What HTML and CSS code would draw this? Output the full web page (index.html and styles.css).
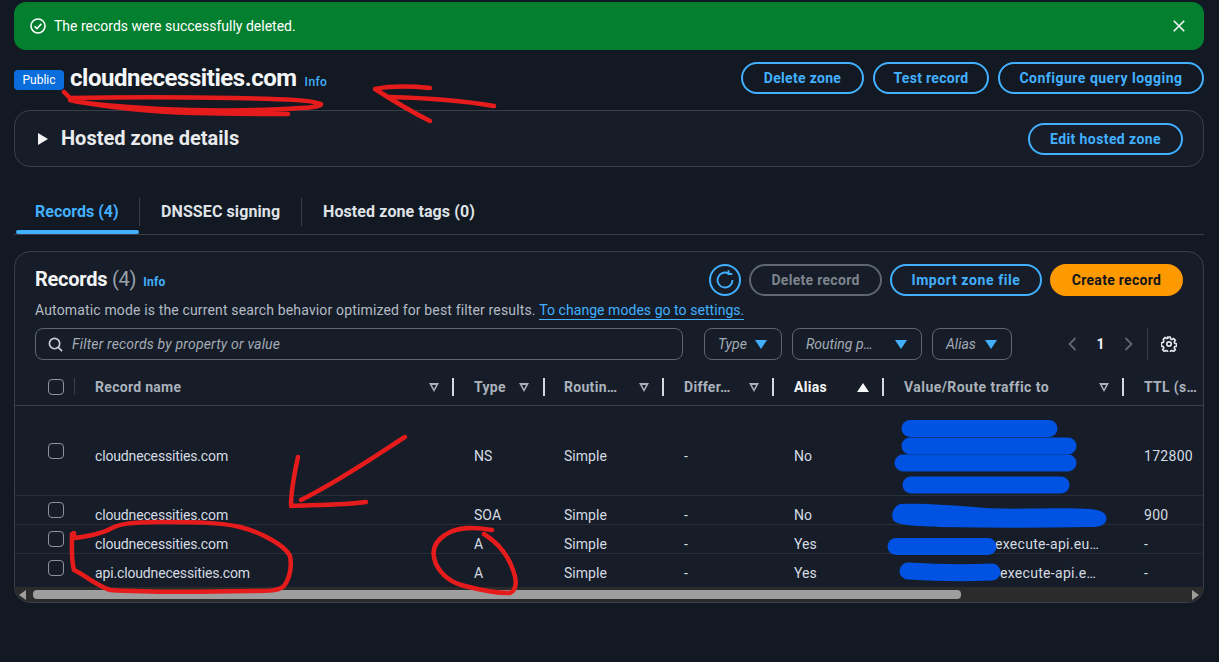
FILE: index.html
```html
<!DOCTYPE html>
<html lang="en">
<head>
<meta charset="utf-8">
<title>cloudnecessities.com</title>
<link rel="stylesheet" href="styles.css">
</head>
<body>
<div class="flash">
  <svg class="flash-icon" viewBox="0 0 16 16"><circle cx="8" cy="8" r="7"/><path d="M4.6 8.2l2.4 2.4 4.4-4.8"/></svg>
  <span class="flash-text">The records were successfully deleted.</span>
  <svg class="flash-close" viewBox="0 0 16 16"><path d="M2 2l12 12M14 2L2 14"/></svg>
</div>

<header class="page-head">
  <span class="badge">Public</span>
  <h1 class="zone-title">cloudnecessities.com</h1>
  <a class="info info-title">Info</a>
  <div class="actions head-actions">
    <button class="btn btn-delete-zone">Delete zone</button>
    <button class="btn btn-test">Test record</button>
    <button class="btn btn-config">Configure query logging</button>
  </div>
</header>

<section class="panel details">
  <span class="caret"></span>
  <h2 class="details-title">Hosted zone details</h2>
  <button class="btn btn-edit">Edit hosted zone</button>
</section>

<nav class="tabs">
  <a class="tab tab-active">Records (4)</a>
  <a class="tab tab-dnssec">DNSSEC signing</a>
  <a class="tab tab-tags">Hosted zone tags (0)</a>
</nav>

<section class="panel records">
  <div class="rec-head">
    <h2 class="rec-title">Records <span class="rec-count">(4)</span></h2>
    <a class="info info-rec">Info</a>
    <div class="actions rec-actions">
      <button class="btn btn-refresh" aria-label="Refresh">
        <svg viewBox="0 0 16 16"><path d="M14 8A6 6 0 1 1 10.800 2.700"/><path d="M10.800 .2v3h3"/></svg>
      </button>
      <button class="btn btn-disabled">Delete record</button>
      <button class="btn btn-import">Import zone file</button>
      <button class="btn btn-primary">Create record</button>
    </div>
  </div>
  <p class="rec-desc">Automatic mode is the current search behavior optimized for best filter results. <a class="rec-link">To change modes go to settings.</a></p>

  <div class="filters">
    <div class="search">
      <svg viewBox="0 0 16 16"><circle cx="7" cy="7" r="5.5"/><path d="M11 11l4 4"/></svg>
      <span>Filter records by property or value</span>
    </div>
    <div class="select sel-type"><span>Type</span><i class="sel-caret"></i></div>
    <div class="select sel-routing"><span>Routing p…</span><i class="sel-caret"></i></div>
    <div class="select sel-alias"><span>Alias</span><i class="sel-caret"></i></div>
    <div class="pager">
      <svg class="pg" viewBox="0 0 10 16"><path d="M8 2L2 8l6 6"/></svg>
      <b>1</b>
      <svg class="pg" viewBox="0 0 10 16"><path d="M2 2l6 6-6 6"/></svg>
    </div>
    <div class="settings">
      <svg viewBox="0 0 16 16"><circle cx="8" cy="8" r="2.2"/><path d="M6.800 1h2.400l.4 2 1.300.6 1.800-1 1.600 1.800-1.100 1.700.5 1.300 2 .5v2.200l-2 .5-.5 1.300 1.100 1.700-1.600 1.800-1.800-1-1.300.6-.4 2H6.800l-.4-2-1.300-.6-1.800 1-1.600-1.800 1.100-1.700-.5-1.300-2-.5V6.900l2-.5.5-1.300L2.300 3.400 3.900 1.600l1.800 1 1.300-.6z"/></svg>
    </div>
  </div>

  <div class="table">
    <div class="row row-head">
      <div class="cell cell-check"><span class="check"></span></div>
      <div class="th">Record name<i class="sort"></i></div>
      <div class="th">Type<i class="sort"></i></div>
      <div class="th">Routin…<i class="sort"></i></div>
      <div class="th">Differ…<i class="sort"></i></div>
      <div class="th th-sorted">Alias<i class="sort-up"></i></div>
      <div class="th th-value">Value/Route traffic to<i class="sort"></i></div>
      <div class="th th-last">TTL (s…</div>
    </div>
    <div class="row row-ns">
      <div class="cell cell-check"><span class="check"></span></div>
      <div class="cell">cloudnecessities.com</div><div class="cell">NS</div><div class="cell">Simple</div><div class="cell">-</div><div class="cell">No</div><div class="cell"></div><div class="cell">172800</div>
    </div>
    <div class="row row-sm">
      <div class="cell cell-check"><span class="check"></span></div>
      <div class="cell">cloudnecessities.com</div><div class="cell">SOA</div><div class="cell">Simple</div><div class="cell">-</div><div class="cell">No</div><div class="cell"></div><div class="cell">900</div>
    </div>
    <div class="row row-sm">
      <div class="cell cell-check"><span class="check"></span></div>
      <div class="cell">cloudnecessities.com</div><div class="cell">A</div><div class="cell">Simple</div><div class="cell">-</div><div class="cell">Yes</div><div class="cell cell-val"><span class="val-a">execute-api.eu…</span></div><div class="cell">-</div>
    </div>
    <div class="row row-sm row-last">
      <div class="cell cell-check"><span class="check"></span></div>
      <div class="cell">api.cloudnecessities.com</div><div class="cell">A</div><div class="cell">Simple</div><div class="cell">-</div><div class="cell">Yes</div><div class="cell cell-val"><span class="val-b">execute-api.e…</span></div><div class="cell">-</div>
    </div>
  </div>

  <div class="scrollbar">
    <i class="sb-left"></i>
    <div class="sb-thumb"></div>
    <i class="sb-right"></i>
  </div>
</section>

<svg class="marks" viewBox="0 0 1219 662" aria-hidden="true">
  <g class="redact">
    <path d="M910 428.500H1049"/>
    <path d="M910 446H1068"/>
    <path d="M903 463H1068"/>
    <path d="M911 485H1061"/>
    <path d="M896 546.500H988"/>
    <path d="M908 571C940 573 970 573 992 572"/>
    <path class="redact-fill" d="M900 504C920 503 950 505 985 508C1020 510 1060 507 1090 509C1104 510 1108 515 1106 521C1104 526 1098 527 1090 527C1040 528 990 528 940 527C920 526 900 526 894 521C890 515 893 507 900 504Z"/>
  </g>
  <g class="ink">
    <path d="M64 92L70 98C120 97 180 97 233 98S312 100 321 104C322 106 310 108 300 108C260 111 200 111 160 109S90 105 70 100C110 108 160 112 195 113S260 114 288 114"/>
    <path d="M430 88C410 86 390 86 375 89C392 100 412 112 430 121"/>
    <path d="M389 97C430 98 465 101 494 106"/>
    <path d="M405 437C390 446 345 478 301 500"/>
    <path d="M298 457C294 475 291 490 291 506C315 505 345 505 366 502"/>
    <path d="M74 533V538C90 536 101 534 110 529S130 522 160 522S220 522 240 527S285 545 290 556C292 566 290 578 284 586C278 591 270 591 250 591C200 592 140 592 110 590C95 585 85 575 74 570C71 560 72 545 72 534"/>
    <path d="M492 530C475 527 458 526 445 535C434 542 431 552 436 564C442 576 452 583 465 586C480 590 498 593 510 593C517 590 517 580 513 570C508 555 498 543 484 534"/>
  </g>
</svg>
</body>
</html>
```

FILE: styles.css
```css
* { box-sizing: border-box; }
html, body { height: 100%; }
body {
  margin: 0;
  padding: 2px 15px 0 14px;
  background: #131922;
  color: #d5dbe3;
  font-family: Roboto, "Noto Sans", "Liberation Sans", sans-serif;
  font-size: 14px;
  overflow: hidden;
  position: relative;
}
h1, h2, p { margin: 0; }
button { font-family: inherit; cursor: pointer; }

/* flash */
.flash {
  height: 48px;
  background: #037f30;
  border-radius: 12px;
  display: flex;
  align-items: center;
  padding: 0 18px 0 16px;
  color: #fff;
}
.flash-icon { width: 16px; height: 16px; fill: none; stroke: #fff; stroke-width: 1.6; }
.flash-text { margin-left: 8px; font-size: 14px; }
.flash-close { width: 14px; height: 14px; margin-left: auto; fill: none; stroke: #f2f3f3; stroke-width: 2; }

/* page header */
.page-head { display: flex; align-items: center; height: 32px; margin-top: 12px; }
.badge {
  background: #0a6ddb;
  color: #fff;
  font-size: 12px;
  line-height: 20px;
  height: 20px;
  width: 50px;
  text-align: center;
  border-radius: 4px;
  margin-top: 4px;
}
.zone-title { font-size: 24px; font-weight: 700; color: #f4f6f8; margin: 0 0 0 6px; line-height: 30px; letter-spacing: -.46px; }
.info { color: #42b0ff; font-size: 12px; font-weight: 700; letter-spacing: .2px; }
.info-title { margin: 7px 0 0 8px; font-weight: 500; letter-spacing: .4px; }
.actions { display: flex; align-items: center; margin-left: auto; gap: 8px; }
.head-actions { gap: 9px; }

.btn {
  height: 32px;
  border: 2px solid #42b0ff;
  border-radius: 16px;
  background: transparent;
  color: #42b0ff;
  font-size: 14px;
  font-weight: 700;
  letter-spacing: .3px;
  padding: 0;
  text-align: center;
}
.btn-delete-zone { width: 123px; }
.btn-test { width: 116px; }
.btn-config { width: 206px; letter-spacing: .5px; }
.btn-edit { width: 155px; margin-left: auto; letter-spacing: .4px; }
.btn-refresh { width: 32px; display: flex; align-items: center; justify-content: center; }
.btn-refresh svg { width: 20px; height: 20px; fill: none; stroke: #42b0ff; stroke-width: 1.5; }
.btn-disabled { width: 133px; border-color: #5f6670; color: #7d848e; }
.btn-import { width: 152px; letter-spacing: .6px; }
.btn-primary { width: 133px; background: #ff9900; border-color: #ff9900; color: #0f141a; }

/* panels */
.panel { background: #161d28; border: 1px solid #3a3f47; border-radius: 16px; }
.details {
  height: 57px;
  margin-top: 16px;
  display: flex;
  align-items: center;
  padding: 0 20px 0 23px;
}
.caret {
  width: 0; height: 0;
  border-left: 10px solid #f2f3f3;
  border-top: 6px solid transparent;
  border-bottom: 6px solid transparent;
}
.details-title { font-size: 20px; font-weight: 700; color: #e9ebed; margin: 0 0 2px 13px; line-height: 26px; }

/* tabs */
.tabs {
  display: flex;
  height: 46px;
  margin-top: 22px;
  padding: 9px 0 0 2px;
  border-bottom: 1px solid #3a3f47;
}
.tab {
  height: 28px;
  font-size: 16px;
  font-weight: 700;
  line-height: 28px;
  color: #dfe3e8;
  letter-spacing: .1px;
  white-space: nowrap;
  border-right: 1px solid #3a3f47;
  padding: 0 21px 0 21px;
}
.tab-active { color: #42b0ff; width: 124px; padding: 0 0 0 19px; position: relative; letter-spacing: 0; }
.tab-active::after {
  content: "";
  position: absolute;
  left: 0; right: 0; top: 32px;
  height: 4px;
  border-radius: 2px;
  background: #42b0ff;
}
.tab-dnssec { width: 162px; }
.tab-tags { border-right: 0; }

/* records */
.records { height: 352px; margin-top: 16px; overflow: hidden; padding-top: 12px; display: flex; flex-direction: column; }
.rec-head { display: flex; align-items: center; height: 32px; padding: 0 20px 0 20px; }
.rec-title { font-size: 20px; font-weight: 700; color: #f2f4f6; line-height: 32px; letter-spacing: -.25px; margin-top: -2px; }
.rec-count { font-weight: 400; color: #9aa1ab; }
.info-rec { margin: 3px 0 0 7px; }
.rec-desc { margin: 4px 0 0 20px; line-height: 20px; color: #b4bbc5; font-size: 14px; letter-spacing: .15px; white-space: nowrap; }
.rec-link { color: #42b0ff; border-bottom: 1px solid #42b0ff; padding-bottom: 1px; letter-spacing: .05px; }

.filters { display: flex; align-items: center; height: 32px; margin: 8px 0 0 20px; }
.search, .select {
  height: 32px;
  border: 1px solid #5f6670;
  border-radius: 8px;
  display: flex;
  align-items: center;
  font-style: italic;
  color: #a4abb5;
}
.search { width: 648px; padding-left: 12px; letter-spacing: .18px; }
.search svg { width: 15px; height: 15px; fill: none; stroke: #c6ccd4; stroke-width: 1.8; flex: none; }
.search span { margin-left: 9px; }
.select { padding: 0 14px 0 13px; justify-content: space-between; }
.sel-type { width: 78px; margin-left: 21px; }
.sel-routing { width: 130px; margin-left: 10px; }
.sel-alias { width: 80px; margin-left: 10px; }
.sel-caret {
  width: 0; height: 0;
  border-top: 9px solid #42b0ff;
  border-left: 6px solid transparent;
  border-right: 6px solid transparent;
}
.pager { display: flex; align-items: center; margin-left: 55px; width: 67px; justify-content: space-between; }
.pager b { color: #f2f3f3; font-size: 14px; }
.pg { width: 11px; height: 16px; fill: none; stroke: #5f6670; stroke-width: 1.8; }
.settings { margin-left: 13px; height: 32px; border-left: 1px solid #3a3f47; padding-left: 13px; display: flex; align-items: center; }
.settings svg { width: 16px; height: 16px; fill: none; stroke: #e2e5e9; stroke-width: 1.7; }

/* table */
.table { margin-top: 9px; }
.row {
  display: grid;
  grid-template-columns: 59px 379px 90px 120px 110px 110px 240px 100px;
  align-items: stretch;
  border-bottom: 1px solid #272e39;
  width: 1210px;
}
.row-head { height: 37px; border-bottom-color: #3a3f47; }
.row-ns { height: 90px; }
.row-sm { height: 29px; }
.row-last { border-bottom: 0; height: 33px; }
.cell { display: flex; align-items: center; padding: 10px 0 0 21px; height: 100%; white-space: nowrap; color: #d5dbe3; letter-spacing: .04px; }
.cell:nth-child(2) { letter-spacing: -.15px; }
.cell:last-child { letter-spacing: .3px; }
.cell-check { padding: 0 0 0 33px; position: relative; }
.row-head .cell-check::after {
  content: "";
  position: absolute;
  right: -1px;
  top: 9px;
  width: 1px;
  height: 17px;
  background: #3a3f47;
}
.row-last .cell-check { align-items: flex-start; padding-top: 6px; }
.row-last .cell:not(.cell-check) { padding-top: 11px; align-items: flex-start; }
.cell-val { letter-spacing: .3px; }
.check {
  display: block;
  width: 16px;
  height: 16px;
  border: 1px solid #8d949e;
  border-radius: 4px;
}
.th {
  display: flex;
  align-items: center;
  padding: 0 14px 0 21px;
  font-weight: 700;
  color: #aab1bb;
  letter-spacing: .3px;
  position: relative;
  white-space: nowrap;
}
.th-value { letter-spacing: .45px; }
.th::after {
  content: "";
  position: absolute;
  right: -1px;
  top: 9px;
  width: 2px;
  height: 18px;
  background: #d5d9de;
}
.th:nth-child(3)::after { right: -2px; }
.th-last::after { display: none; }
.th-sorted { color: #f4f6f8; }
.sort {
  margin-left: auto;
  width: 0; height: 0;
  border-top: 9px solid #aab1bb;
  border-left: 5px solid transparent;
  border-right: 5px solid transparent;
  position: relative;
}
.sort::after {
  content: "";
  position: absolute;
  left: -2px;
  top: -7px;
  width: 0; height: 0;
  border-top: 4px solid #161d28;
  border-left: 2px solid transparent;
  border-right: 2px solid transparent;
}
.sort-up {
  margin-left: auto;
  width: 0; height: 0;
  border-bottom: 9px solid #f4f6f8;
  border-left: 6px solid transparent;
  border-right: 6px solid transparent;
}
.val-a { margin-left: 91px; }
.val-b { margin-left: 96px; }

/* scrollbar */
.scrollbar {
  margin-top: auto;
  height: 16px;
  background: #2b2b2b;
  display: flex;
  align-items: center;
  padding: 0 4px;
}
.sb-left, .sb-right { width: 0; height: 0; border-top: 5px solid transparent; border-bottom: 5px solid transparent; }
.sb-left { border-right: 7px solid #9e9e9e; }
.sb-right { border-left: 7px solid #9e9e9e; margin-left: auto; }
.sb-thumb { width: 928px; height: 9px; background: #9e9e9e; border-radius: 4px; margin-left: 7px; }

/* hand-drawn annotations over the screenshot */
.marks { position: absolute; left: 0; top: 0; width: 1219px; height: 662px; pointer-events: none; }
.redact path { fill: none; stroke: #0052e3; stroke-width: 17; stroke-linecap: round; stroke-linejoin: round; }
.redact .redact-fill { fill: #0052e3; stroke: none; }
.ink path { fill: none; stroke: #e61c1c; stroke-width: 4.5; stroke-linecap: round; stroke-linejoin: round; }
```
